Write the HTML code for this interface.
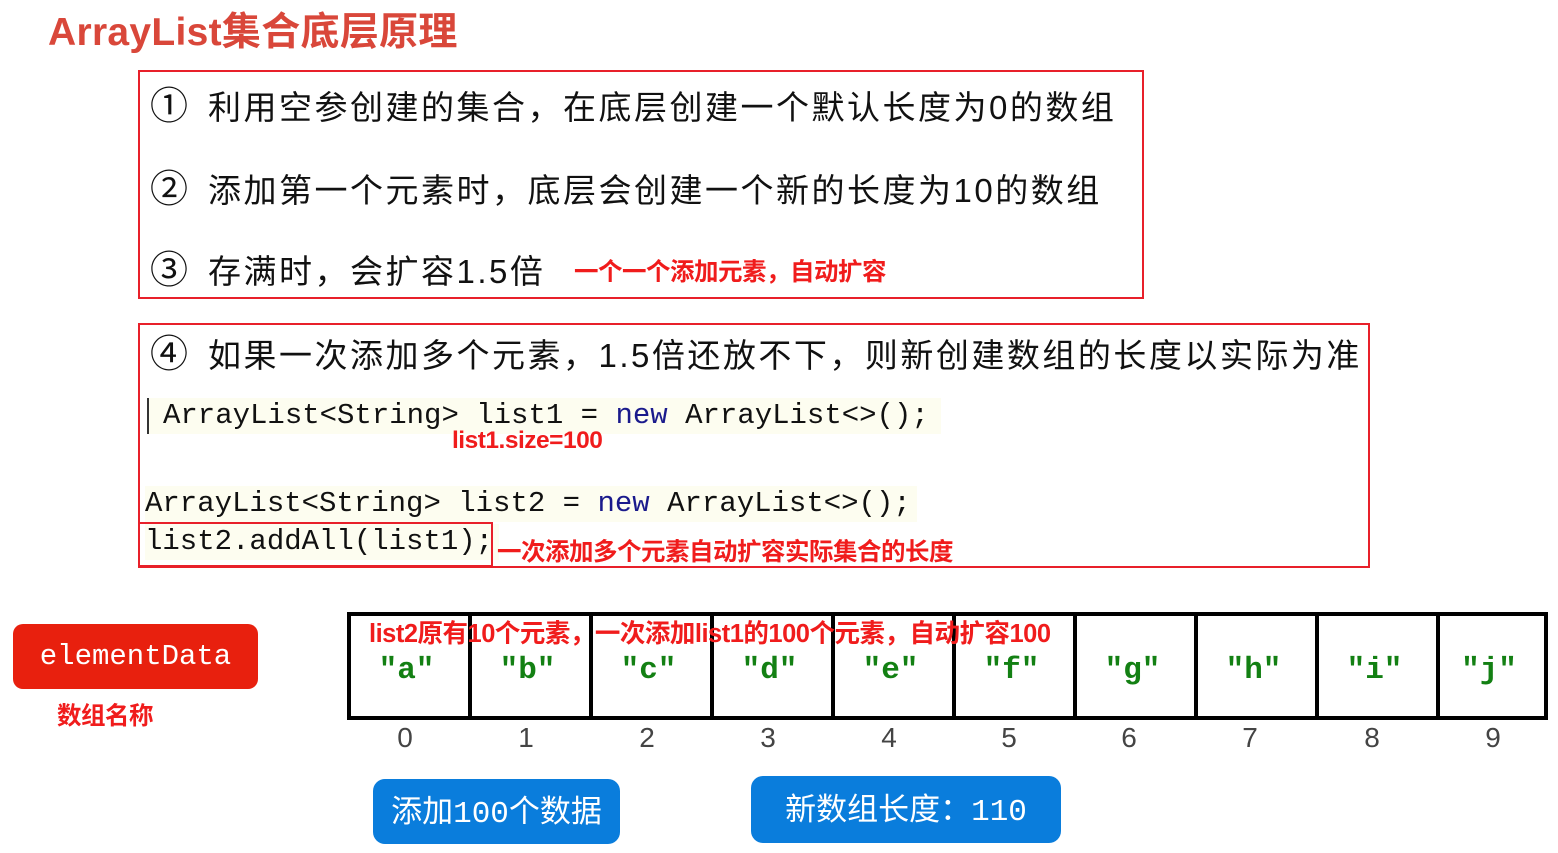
<!DOCTYPE html>
<html><head><meta charset="utf-8"><style>
body{margin:0;width:1558px;height:853px;background:#fff;position:relative;overflow:hidden;font-family:"Liberation Sans","Noto Sans CJK SC",sans-serif}
.a{position:absolute;white-space:nowrap}
.t{font-size:33px;letter-spacing:2.5px;color:#111;line-height:40px}
.n{font-size:38px;display:inline-block;width:58px;letter-spacing:0}
.c{font-family:"Liberation Mono","Noto Sans CJK SC",monospace;font-size:29px;color:#111;line-height:36px;background:#fdfdf0}
.r{color:#f01c1c;font-weight:bold;font-size:24.5px;letter-spacing:-0.5px}
.box{position:absolute;border:2px solid #e8202a}
.cell{position:absolute;top:612px;height:100px;width:117px;border-left:4px solid #000;border-top:4px solid #000;border-bottom:4px solid #000;text-align:center;line-height:110px;color:#138013;font-weight:bold;font-family:"Liberation Mono",monospace;font-size:31px;text-indent:-6px}
.idx{position:absolute;top:722px;width:120px;text-align:center;font-size:28px;color:#444}
.btn{position:absolute;background:#0a7ddc;color:#fff;border-radius:12px;text-align:center;font-size:31px}
</style></head><body>
<div class="a" style="left:48px;top:1px;font-size:39px;color:#d9473a;font-weight:bold;letter-spacing:0.3px">ArrayList集合底层原理</div>

<div class="box" style="left:138px;top:70px;width:1002px;height:225px"></div>
<div class="a t" style="left:150px;top:87px"><span class="n">①</span>利用空参创建的集合，在底层创建一个默认长度为0的数组</div>
<div class="a t" style="left:150px;top:170px"><span class="n">②</span>添加第一个元素时，底层会创建一个新的长度为10的数组</div>
<div class="a t" style="left:150px;top:251px"><span class="n">③</span>存满时，会扩容1.5倍</div>
<div class="a r" style="left:574px;top:253px">一个一个添加元素，自动扩容</div>

<div class="box" style="left:138px;top:323px;width:1228px;height:241px"></div>
<div class="a t" style="left:150px;top:335px"><span class="n">④</span>如果一次添加多个元素，1.5倍还放不下，则新创建数组的长度以实际为准</div>
<div class="a c" style="left:147px;top:398px;padding-left:14px;padding-right:12px;border-left:2px solid #333">ArrayList&lt;String&gt; list1 = <span style="color:#1a1a8c">new</span> ArrayList&lt;&gt;();</div>
<div class="a r" style="left:452px;top:427px">list1.size=100</div>
<div class="a c" style="left:145px;top:486px;padding-right:6px">ArrayList&lt;String&gt; list2 = <span style="color:#1a1a8c">new</span> ArrayList&lt;&gt;();</div>
<div class="a c" style="left:145px;top:524px;padding-right:6px">list2.addAll(list1);</div>
<div class="box" style="left:138px;top:522px;width:351px;height:41px"></div>
<div class="a r" style="left:497px;top:533px">一次添加多个元素自动扩容实际集合的长度</div>

<div class="btn" style="left:13px;top:624px;width:245px;height:65px;line-height:65px;background:#e8200e;font-family:'Liberation Mono',monospace;font-size:29px;border-radius:10px">elementData</div>
<div class="a r" style="left:57px;top:697px">数组名称</div>

<div class="cell" style="left:347px">"a"</div>
<div class="cell" style="left:468px">"b"</div>
<div class="cell" style="left:589px">"c"</div>
<div class="cell" style="left:710px">"d"</div>
<div class="cell" style="left:831px">"e"</div>
<div class="cell" style="left:952px">"f"</div>
<div class="cell" style="left:1073px">"g"</div>
<div class="cell" style="left:1194px">"h"</div>
<div class="cell" style="left:1315px">"i"</div>
<div class="cell" style="left:1436px;width:104px;border-right:4px solid #000">"j"</div>
<div class="a r" style="left:369px;top:613px;font-size:25.5px">list2原有10个元素，一次添加list1的100个元素，自动扩容100</div>

<div class="idx" style="left:345px">0</div><div class="idx" style="left:466px">1</div><div class="idx" style="left:587px">2</div><div class="idx" style="left:708px">3</div><div class="idx" style="left:829px">4</div><div class="idx" style="left:949px">5</div><div class="idx" style="left:1069px">6</div><div class="idx" style="left:1190px">7</div><div class="idx" style="left:1312px">8</div><div class="idx" style="left:1433px">9</div>

<div class="btn" style="left:373px;top:779px;width:247px;height:65px;line-height:65px">添加<span style="font-family:'Liberation Mono',monospace">100</span>个数据</div>
<div class="btn" style="left:751px;top:776px;width:310px;height:67px;line-height:67px">新数组长度：<span style="font-family:'Liberation Mono',monospace">110</span></div>
</body></html>
